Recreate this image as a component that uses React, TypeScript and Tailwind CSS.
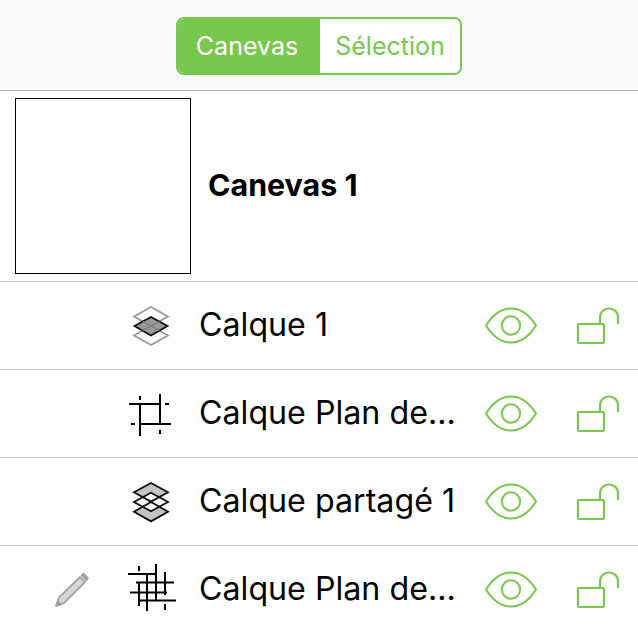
import type { ReactNode } from 'react';

const font = { fontFamily: 'Inter, "Liberation Sans", sans-serif' };

function LayersOutline() {
  return (
    <svg className="shrink-0" width="44" height="45" viewBox="128 303 44 45" fill="none">
      <path d="M151 307 L168 316.5 L151 326 L134 316.5 Z" stroke="#9a9a9a" strokeWidth="1.8" />
      <path d="M151 326 L168 335.5 L151 345 L134 335.5 Z" stroke="#9a9a9a" strokeWidth="1.8" />
      <path d="M151 317 L167.5 326 L151 335.5 L134.5 326 Z" stroke="#111" strokeWidth="1.8" fill="#9a9a9a" />
      <path d="M142.5 321.5 L151 326 L159.5 321.5 M142.5 330.5 L151 326 L159.5 330.5" stroke="#7c7c7c" strokeWidth="1.2" />
    </svg>
  );
}

function LayersShared() {
  return (
    <svg className="shrink-0" width="44" height="45" viewBox="128 479 44 45" fill="none">
      <path d="M151 483 L168 492.3 L151 501.6 L134 492.3 Z" fill="#c4c4c4" />
      <path d="M151 502 L168 511.7 L151 521.4 L134 511.7 Z" fill="#c4c4c4" />
      <path d="M151 492.7 L168 502 L151 511.3 L134 502 Z" fill="#fff" />
      <path d="M151 483 L168 492.3 L151 501.6 L134 492.3 Z" stroke="#111" strokeWidth="1.8" />
      <path d="M151 502 L168 511.7 L151 521.4 L134 511.7 Z" stroke="#111" strokeWidth="1.8" />
      <path d="M151 492.7 L168 502 L151 511.3 L134 502 Z" stroke="#111" strokeWidth="1.8" />
    </svg>
  );
}

function GridSmall() {
  return (
    <svg className="shrink-0" width="44" height="45" viewBox="128 391 44 45" fill="none" stroke="#000" strokeWidth="2">
      <path d="M129 404 H160 M140 424 H171 M140 404 V436 M160 394 V424" />
      <path d="M140 396 V400 M165 404 H169 M131 424 H135 M160 430 V434" />
    </svg>
  );
}

function GridDense() {
  return (
    <svg className="shrink-0" width="54" height="51" viewBox="123 564 54 51" fill="none" stroke="#000" strokeWidth="2">
      <path d="M128 574 H156 M136 582.5 H174 M130 592.5 H167 M139 600.5 H176" />
      <path d="M139 582 V606 M147 574 V611 M156 564 V601 M165 572 V595" />
      <path d="M139 566 V571 M165 604 V610 M147 577 V579 M156 595 V597" />
    </svg>
  );
}

function Pencil() {
  return (
    <svg className="shrink-0" width="36" height="36" viewBox="0 0 36 36" fill="none">
      <path d="M2 34 L5 25.5 L26 5 L31 10 L10 31 Z" stroke="#a8a8a8" strokeWidth="2" fill="#d6d6d6" strokeLinejoin="round" />
      <path d="M27.5 3 L29.5 1.5 L34 6 L32.5 8.5 Z" fill="#a0a0a0" stroke="#a0a0a0" strokeWidth="1.5" strokeLinejoin="round" />
      <path d="M2 34 L4 28.5 L7.5 32 Z" fill="#a0a0a0" />
    </svg>
  );
}

function Eye() {
  return (
    <svg className="shrink-0" width="54" height="37" viewBox="0 0 54 37" fill="none" stroke="#7ac74f" strokeWidth="2">
      <path d="M1 18.5 C8.5 6.5 16.5 1.5 26 1.5 C35.5 1.5 43.5 6.5 51 18.5 C43.5 30.5 35.5 35.5 26 35.5 C16.5 35.5 8.5 30.5 1 18.5 Z" />
      <circle cx="26" cy="18.5" r="9.2" />
    </svg>
  );
}

function OpenLock() {
  return (
    <svg className="shrink-0" width="44" height="38" viewBox="0 0 44 38" fill="none" stroke="#7ac74f" strokeWidth="2.2">
      <rect x="2" y="17" width="26" height="19" rx="1" />
      <path d="M24 17 V10 C24 5 28 1.5 33 1.5 C38 1.5 42 5 42 10 V17" />
    </svg>
  );
}

function Row({ icon, pencil, label }: { icon: ReactNode; pencil?: boolean; label: string }) {
  return (
    <div className="h-[88px] border-b border-[#c8c8c8] flex items-center shrink-0">
      <div className="w-[128px] shrink-0 flex justify-end pr-[38px]">{pencil && <Pencil />}</div>
      <div className="w-[44px] shrink-0 flex items-center justify-center">{icon}</div>
      <div className="w-[313px] shrink-0 pl-[27px] text-[32.2px] text-black whitespace-nowrap">{label}</div>
      <div className="w-[54px] shrink-0 flex">
        <Eye />
      </div>
      <div className="pl-[37px] flex">
        <OpenLock />
      </div>
    </div>
  );
}

export default function App() {
  return (
    <div className="w-[638px] h-[630px] bg-white overflow-hidden flex flex-col" style={font}>
      <div className="h-[91px] shrink-0 bg-[#f8f8f8] border-b border-[#b4b4b4] flex items-start justify-center pt-[17px]">
        <div className="flex h-[58px] w-[286px] rounded-[8px] border-2 border-[#7ac74f] overflow-hidden text-[25px]">
          <div className="w-[142px] pr-[4px] pt-[1px] bg-[#7ac74f] text-white flex items-center justify-center">Canevas</div>
          <div className="flex-1 pt-[1px] bg-white text-[#7ac74f] flex items-center justify-center">Sélection</div>
        </div>
      </div>
      <div className="h-[191px] shrink-0 border-b border-[#c8c8c8] flex items-start pt-[7px] pl-[15px]">
        <div className="w-[176px] h-[176px] border border-black bg-white shrink-0" />
        <div className="pl-[17px] h-[176px] flex items-center text-[30.4px] font-bold text-black">Canevas 1</div>
      </div>
      <Row icon={<LayersOutline />} label="Calque 1" />
      <Row icon={<GridSmall />} label="Calque Plan de..." />
      <Row icon={<LayersShared />} label="Calque partagé 1" />
      <Row icon={<GridDense />} pencil label="Calque Plan de..." />
    </div>
  );
}
